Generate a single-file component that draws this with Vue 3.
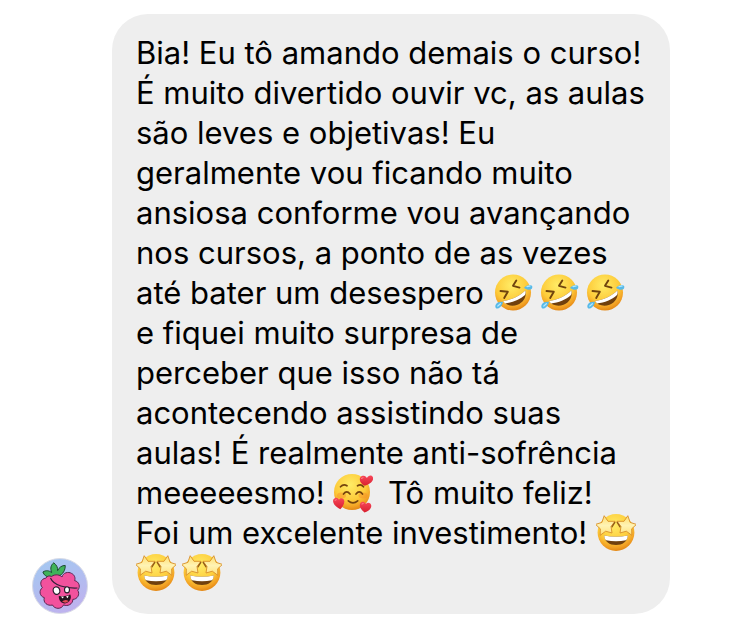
<template>
  <main class="chat">
    <svg class="sprites" aria-hidden="true">
      <defs>
        <radialGradient id="face" cx="0.45" cy="0.3" r="0.72">
          <stop offset="0" stop-color="#ffec66" />
          <stop offset="0.6" stop-color="#fdcb3a" />
          <stop offset="0.85" stop-color="#f2a023" />
          <stop offset="1" stop-color="#e08312" />
        </radialGradient>
        <linearGradient id="star" x1="0" y1="0" x2="0" y2="1">
          <stop offset="0" stop-color="#ffdf6e" />
          <stop offset="0.5" stop-color="#fff3b4" />
          <stop offset="1" stop-color="#ffe27a" />
        </linearGradient>
        <linearGradient id="heart" x1="0" y1="0" x2="0" y2="1">
          <stop offset="0" stop-color="#f8475a" />
          <stop offset="1" stop-color="#d8202f" />
        </linearGradient>
        <linearGradient id="avatar" x1="0.2" y1="0" x2="0.6" y2="1">
          <stop offset="0" stop-color="#a3c8f1" />
          <stop offset="1" stop-color="#bfb2ee" />
        </linearGradient>
      </defs>

      <symbol id="rofl" viewBox="0 0 40 40">
        <circle cx="20" cy="19.5" r="18" fill="url(#face)" />
        <g fill="none" stroke="#70440d" stroke-width="1.9" stroke-linecap="round" stroke-linejoin="round">
          <path d="M7.5 18 L14.8 18.8 L11.2 25" />
          <path d="M23.3 7.5 L20 12.8 L26.5 14.6" />
        </g>
        <path d="M10 28 C18 27 27 23 32.3 17.5 C34 23.5 30.5 29.5 24.5 31.8 C18.5 34 12.5 32 10 28 Z" fill="#70400e" />
        <path d="M10 28 C18 27 27 23 32.3 17.5 C32.8 19.2 32.7 20.6 32 22 C27 26.6 19.5 29.8 12 30.4 Z" fill="#fff" />
        <path d="M31 14.8 C33.2 11.8 38.8 10.7 39.3 13.5 C39.8 17.3 35 18 31 14.8 Z" fill="#58bae9" />
        <path d="M10 29 C5 28 1.4 31.5 2.5 34.4 C4.2 37.4 8.7 34.2 10 29 Z" fill="#58bae9" />
        <path d="M34 13.7 L37.2 12.8 M4.8 33 L7.4 30.7" stroke="#b6e8fb" stroke-width="1.2" stroke-linecap="round" />
      </symbol>

      <symbol id="love" viewBox="0 0 40 40">
        <circle cx="19" cy="19" r="18" fill="url(#face)" />
        <ellipse cx="8.5" cy="22.5" rx="4.5" ry="3" fill="#f68b28" opacity="0.45" />
        <ellipse cx="30" cy="22.5" rx="4.5" ry="3" fill="#f68b28" opacity="0.45" />
        <g fill="none" stroke="#75440e" stroke-width="1.7" stroke-linecap="round">
          <path d="M7.5 13.8 Q10.5 10.4 14 12.8" />
          <path d="M24.5 12.8 Q28 10.4 30.5 13.8" />
          <path d="M10.5 21 Q13.7 16.8 17 21" />
          <path d="M23 21 Q26.3 16.8 29.5 21" />
          <path d="M15.3 27.8 Q20 31.8 24.7 27.8" />
        </g>
        <g fill="url(#heart)">
          <path d="M31.7 12.8 C26.3 10 25.4 5 28.8 3.1 C31.1 2 33.2 3.1 33.9 5 C35.2 2.3 38.8 1.4 40 4.5 C41 8 36.5 11.5 31.7 12.8 Z" />
          <path d="M7.3 36.2 C1.6 33.4 -1 29.3 0.5 26.3 C2 23.9 5 24.3 6 26.7 C7.6 24.5 10.9 25 11.3 28.1 C11.5 31.1 9.6 34 7.3 36.2 Z" />
          <path d="M31.5 39.5 C27.3 36.1 25.7 32.6 27.5 29.9 C29.4 27.6 32 28.8 32.8 31 C34.8 28.8 38 29.8 38.3 32.8 C38.3 36.3 35 38.3 31.5 39.5 Z" />
        </g>
        <path d="M28.5 5.4 L30 4.8 M2.1 27.3 L3.3 26.8 M29 31 L30.2 30.6" stroke="#ff8b8e" stroke-linecap="round" />
      </symbol>

      <symbol id="starry" viewBox="0 0 40 40">
        <circle cx="20" cy="19.5" r="18.4" fill="url(#face)" />
        <path d="M8.3 22.5 Q20 25 31.7 22.5 C31.5 28.8 26.5 32 20 32 C13.5 32 8.5 28.8 8.3 22.5 Z" fill="#70400e" />
        <path d="M8.3 22.5 Q20 25 31.7 22.5 C31.6 25 31 26.3 30 27.2 Q20 29.2 10 27.2 C9 26.3 8.4 25 8.3 22.5 Z" fill="#fff" />
        <g fill="url(#star)" stroke="#d88f28" stroke-width="0.9" stroke-linejoin="round">
          <path d="M8.2 2.7 L12 8.3 L19 8.3 L15 13.4 L16 20 L9.7 18.2 L4.2 22.3 L4.3 15.8 L-0.5 11.4 L5.9 9.4 Z" />
          <path d="M31.8 2.7 L28 8.3 L21 8.3 L25 13.4 L24 20 L30.3 18.2 L35.8 22.3 L35.7 15.8 L40.5 11.4 L34.1 9.4 Z" />
        </g>
        <path d="M16 13.8 L18.8 9.4 M24 13.8 L21.2 9.4" stroke="#8f5a18" stroke-width="1.3" stroke-linecap="round" />
      </symbol>
    </svg>

    <svg class="avatar" viewBox="0 0 56 56" role="img" aria-label="Foto de perfil">
      <circle cx="28" cy="28" r="27.5" fill="url(#avatar)" stroke="#d9dbe6" />
      <path d="M19 19.5 C14.5 19.3 11.8 17 10.9 14 C14 12 17 12.5 19.6 14.5 C18 10 19 7 21.8 4.8 C24.5 7 26 9.5 25.6 12.6 C27.3 9.2 30 7.4 33.2 7.4 C33.5 12 31 16.5 26 18.5 Z" fill="#3fb35a" stroke="#1d4a30" stroke-linejoin="round" />
      <path d="M19.5 18.5 C23.5 15.6 28.3 17 30 19 C31 14.5 36.5 13.4 39.5 15.4 C42.7 16.8 43.6 20.3 42.6 22.6 C47.2 23.6 48.8 29 45.7 32.2 C48.3 36.2 45.4 41.4 40.8 41.4 C41 46 35.6 48.8 31.6 46.9 C29.4 51.6 22.6 51.3 20.5 47 C15.6 48.3 10.8 44.7 12.3 39.6 C7.6 38.4 6.6 32.4 10.4 29.7 C7.2 25.9 8.9 20.6 13.8 20.2 C15.2 17.8 17.5 17.4 19.5 18.5 Z" fill="#f2529d" stroke="#5a2450" stroke-width="1" />
      <path d="M18.5 20 C21.5 27.5 34 30.5 45.5 30" fill="none" stroke="#342039" stroke-width="1.2" />
      <ellipse cx="24.5" cy="32.6" rx="3.3" ry="3.8" fill="#fff" stroke="#25192a" stroke-width="1.2" transform="rotate(-18 24.5 32.6)" />
      <ellipse cx="35" cy="31.8" rx="2.5" ry="3.1" fill="#fff" stroke="#25192a" stroke-width="1.1" />
      <path d="M26.8 38 Q33 39 38.3 36.5 C40 40.2 37.7 44.8 33 45.4 C29.5 45.6 26.6 42.2 26.8 38 Z" fill="#24151f" />
      <path d="M29 38.5 L30.5 40.5 L32 38.7 Z M34 38.5 L35.6 40.3 L36.8 37.6 Z" fill="#fff" />
      <path d="M30 43.6 Q33 40.7 36.6 42.9 Q34 46 30 43.6 Z" fill="#e34a54" />
    </svg>

    <p class="bubble">
      <span v-for="(line, i) in lines" :key="i" class="line">
        <template v-for="(part, j) in line" :key="j">
          <span v-if="typeof part === 'string'">{{ part }}</span>
          <svg v-else class="emoji" role="img" :aria-label="part.label">
            <use :href="'#' + part.icon" />
          </svg>
        </template>
      </span>
    </p>
  </main>
</template>

<script setup>
const rofl = { icon: 'rofl', label: 'rolando de rir' }
const love = { icon: 'love', label: 'sorriso com corações' }
const starry = { icon: 'starry', label: 'olhos de estrela' }

const lines = [
  ['Bia! Eu tô amando demais o curso!'],
  ['É muito divertido ouvir vc, as aulas'],
  ['são leves e objetivas! Eu'],
  ['geralmente vou ficando muito'],
  ['ansiosa conforme vou avançando'],
  ['nos cursos, a ponto de as vezes'],
  ['até bater um desespero ', rofl, rofl, rofl],
  ['e fiquei muito surpresa de'],
  ['perceber que isso não tá'],
  ['acontecendo assistindo suas'],
  ['aulas! É realmente anti-sofrência'],
  ['meeeeesmo! ', love, ' Tô muito feliz!'],
  ['Foi um excelente investimento! ', starry],
  [starry, starry]
]
</script>

<style>
body {
  margin: 0;
  background: #fff;
}
</style>

<style scoped>
.chat {
  display: flex;
  align-items: flex-end;
  gap: 24px;
  padding: 14px 80px 16px 32px;
  font-family: Inter, "Liberation Sans", sans-serif;
}

.sprites {
  position: absolute;
  width: 0;
  height: 0;
}

.avatar {
  flex-shrink: 0;
  width: 56px;
  height: 56px;
}

.bubble {
  flex: 1;
  min-width: 0;
  margin: 0;
  padding: 19px 24px 21px;
  border-radius: 36px;
  background: #eee;
  color: #000;
  font-size: 31px;
  line-height: 40px;
}

.line {
  display: block;
  height: 40px;
  white-space: pre;
}

.emoji {
  width: 40px;
  height: 40px;
  margin-right: 6px;
  vertical-align: top;
}
</style>
